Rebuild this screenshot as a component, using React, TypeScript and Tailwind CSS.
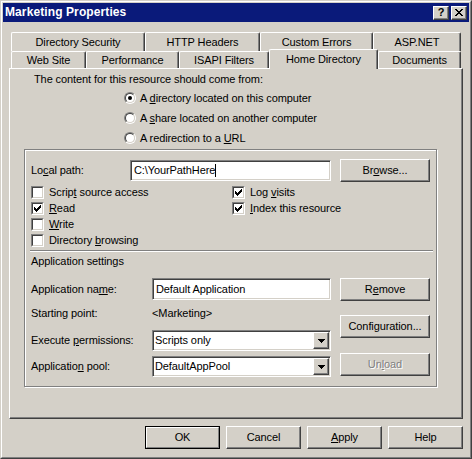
import type { ReactNode } from "react";

const backTabs = [
  { label: "Directory Security", w: "w-[134px]" },
  { label: "HTTP Headers", w: "w-[115px]" },
  { label: "Custom Errors", w: "w-[113px]" },
  { label: "ASP.NET", w: "w-[88px]" },
];

const frontTabs = [
  { label: "Web Site", w: "w-[75px]" },
  { label: "Performance", w: "w-[93px]" },
  { label: "ISAPI Filters", w: "w-[90px]" },
  { label: "Home Directory", w: "w-[109px]", active: true },
  { label: "Documents", w: "w-[83px]" },
];

const raised =
  "border border-t-white border-l-white border-r-[#404040] border-b-[#404040] shadow-[inset_-1px_-1px_0_#808080]";
const sunken =
  "border border-t-[#808080] border-l-[#808080] border-r-white border-b-white shadow-[inset_1px_1px_0_#404040,inset_-1px_-1px_0_#d4d0c8]";

function Button({
  children,
  className = "",
  primary = false,
  disabled = false,
}: {
  children: ReactNode;
  className?: string;
  primary?: boolean;
  disabled?: boolean;
}) {
  const label = (
    <span className={disabled ? "text-[#808080] [text-shadow:1px_1px_0_#fff]" : ""}>{children}</span>
  );
  if (primary) {
    return (
      <div className={`border border-black ${className}`}>
        <div className="flex h-full w-full items-center justify-center border border-t-white border-l-white border-r-[#808080] border-b-[#808080]">
          {label}
        </div>
      </div>
    );
  }
  return <div className={`flex items-center justify-center ${raised} ${className}`}>{label}</div>;
}

function CheckMark() {
  const px: [number, number][] = [
    [6, 0],
    [5, 1], [6, 1],
    [0, 2], [4, 2], [5, 2], [6, 2],
    [0, 3], [1, 3], [3, 3], [4, 3], [5, 3],
    [0, 4], [1, 4], [2, 4], [3, 4], [4, 4],
    [1, 5], [2, 5], [3, 5],
    [2, 6],
  ];
  return (
    <svg width="7" height="7" viewBox="0 0 7 7" shapeRendering="crispEdges">
      {px.map(([x, y]) => (
        <rect key={`${x}-${y}`} x={x} y={y} width="1" height="1" fill="#000" />
      ))}
    </svg>
  );
}

function CheckBox({ checked = false, children }: { checked?: boolean; children: ReactNode }) {
  return (
    <div className="flex h-[16px] items-center">
      <div className="h-[13px] w-[13px] shrink-0 border border-t-[#808080] border-l-[#808080] border-r-white border-b-white">
        <div className="flex h-full w-full items-center justify-center border border-t-[#404040] border-l-[#404040] border-r-[#d4d0c8] border-b-[#d4d0c8] bg-white">
          {checked && <CheckMark />}
        </div>
      </div>
      <span className="ml-[5px]">{children}</span>
    </div>
  );
}

function Radio({ checked = false, children }: { checked?: boolean; children: ReactNode }) {
  return (
    <div className="flex h-[20px] items-center">
      <div className="h-[12px] w-[12px] shrink-0 rounded-full border border-t-[#808080] border-l-[#808080] border-r-white border-b-white">
        <div className="flex h-full w-full items-center justify-center rounded-full border border-t-[#404040] border-l-[#404040] border-r-[#d4d0c8] border-b-[#d4d0c8] bg-white">
          {checked && <div className="h-[4px] w-[4px] rounded-full bg-black" />}
        </div>
      </div>
      <span className="ml-[4px]">{children}</span>
    </div>
  );
}

function Arrow() {
  return (
    <svg width="7" height="4" viewBox="0 0 7 4" shapeRendering="crispEdges">
      <rect x="0" y="0" width="7" height="1" fill="#000" />
      <rect x="1" y="1" width="5" height="1" fill="#000" />
      <rect x="2" y="2" width="3" height="1" fill="#000" />
      <rect x="3" y="3" width="1" height="1" fill="#000" />
    </svg>
  );
}

function Select({ value }: { value: string }) {
  return (
    <div className={`flex h-[21px] w-[179px] items-center justify-between bg-white ${sunken}`}>
      <span className="pl-[2px]">{value}</span>
      <div className={`m-[1px] flex h-[17px] w-[16px] items-center justify-center bg-[#d4d0c8] ${raised}`}>
        <Arrow />
      </div>
    </div>
  );
}

function CloseGlyph() {
  const rows = ["11....11", ".11..11.", "..1111..", "...11...", "..1111..", ".11..11.", "11....11"];
  return (
    <svg width="8" height="7" viewBox="0 0 8 7" shapeRendering="crispEdges">
      {rows.flatMap((r, y) =>
        r.split("").map((c, x) => (c === "1" ? <rect key={`${x}-${y}`} x={x} y={y} width="1" height="1" fill="#000" /> : null))
      )}
    </svg>
  );
}

function TitleBar() {
  return (
    <div className="flex h-[19px] shrink-0 items-center justify-between bg-[#0a1a7a] pl-[2px] pr-[2px]">
      <span className="text-[12px] font-bold tracking-[0.1px] text-white">Marketing Properties</span>
      <div className="flex gap-[2px]">
        <div className={`flex h-[14px] w-[16px] items-center justify-center bg-[#d4d0c8] ${raised}`}>
          <span className="text-[11px] font-bold leading-none">?</span>
        </div>
        <div className={`flex h-[14px] w-[16px] items-center justify-center bg-[#d4d0c8] ${raised}`}>
          <CloseGlyph />
        </div>
      </div>
    </div>
  );
}

function Tabs() {
  return (
    <div className="ml-[2px] flex flex-col">
      <div className="flex h-[19px]">
        {backTabs.map((t) => (
          <div
            key={t.label}
            className={`${t.w} flex items-center justify-center rounded-t-[2px] border-t border-l border-r border-t-white border-l-white border-r-[#404040] pt-[1px] shadow-[inset_-1px_0_0_#808080]`}
          >
            {t.label}
          </div>
        ))}
      </div>
      <div className="flex h-[17px] items-end">
        {frontTabs.map((t) =>
          t.active ? (
            <div
              key={t.label}
              className={`${t.w} relative z-10 -mb-[1px] flex h-[20px] items-center justify-center rounded-t-[2px] border-t border-l border-r border-t-white border-l-white border-r-[#404040] bg-[#d4d0c8] pb-[1px] shadow-[inset_-1px_0_0_#808080]`}
            >
              {t.label}
            </div>
          ) : (
            <div
              key={t.label}
              className={`${t.w} flex h-[17px] items-center justify-center rounded-t-[2px] border-t border-l border-r border-t-white border-l-white border-r-[#404040] pt-[1px] shadow-[inset_-1px_0_0_#808080]`}
            >
              {t.label}
            </div>
          )
        )}
      </div>
    </div>
  );
}

function Panel() {
  return (
    <div className={`flex h-[351px] flex-col ${raised}`}>
      <div className="ml-[24px] mt-[4px] flex h-[13px] items-center">The content for this resource should come from:</div>
      <div className="ml-[114px] mt-[2px] flex flex-col">
        <Radio checked>
          A <u>d</u>irectory located on this computer
        </Radio>
        <Radio>
          A <u>s</u>hare located on another computer
        </Radio>
        <Radio>
          A redirection to a <u>U</u>RL
        </Radio>
      </div>

      <div className="ml-[14px] mt-[1px] flex h-[238px] w-[413px] flex-col border border-[#808080] shadow-[inset_1px_1px_0_#fff,1px_1px_0_#fff]">
        <div className="mt-[9px] flex h-[23px] items-center pl-[6px]">
          <span className="w-[99px]">
            Lo<u>c</u>al path:
          </span>
          <div className={`flex h-[21px] w-[201px] items-center bg-white pl-[3px] ${sunken}`}>
            <span>C:\YourPathHere</span>
            <span className="h-[13px] w-[1px] bg-black" />
          </div>
          <Button className="ml-[9px] h-[23px] w-[90px]">
            Br<u>o</u>wse...
          </Button>
        </div>

        <div className="mt-[2px] flex pl-[6px]">
          <div className="flex w-[201px] flex-col">
            <CheckBox>
              Scrip<u>t</u> source access
            </CheckBox>
            <CheckBox checked>
              <u>R</u>ead
            </CheckBox>
            <CheckBox>
              <u>W</u>rite
            </CheckBox>
            <CheckBox>
              Directory <u>b</u>rowsing
            </CheckBox>
          </div>
          <div className="flex flex-col">
            <CheckBox checked>
              Log <u>v</u>isits
            </CheckBox>
            <CheckBox checked>
              <u>I</u>ndex this resource
            </CheckBox>
          </div>
        </div>

        <div className="ml-[5px] mt-[2px] h-[2px] w-[403px] border-t border-b border-t-[#808080] border-b-white" />

        <div className="ml-[6px] mt-[3px] flex h-[13px] items-center">Application settings</div>

        <div className="mt-[10px] flex pl-[6px]">
          <div className="flex w-[309px] flex-col">
            <div className="flex h-[22px] items-center">
              <span className="w-[121px]">
                Application na<u>m</u>e:
              </span>
              <div className={`flex h-[22px] w-[179px] items-center bg-white pl-[3px] ${sunken}`}>Default Application</div>
            </div>
            <div className="mt-[2px] flex h-[22px] items-center">
              <span className="w-[121px]">Starting point:</span>
              <span>&lt;Marketing&gt;</span>
            </div>
            <div className="mt-[6px] flex h-[21px] items-center">
              <span className="w-[121px]">
                Execute <u>p</u>ermissions:
              </span>
              <Select value="Scripts only" />
            </div>
            <div className="mt-[5px] flex h-[21px] items-center">
              <span className="w-[121px]">
                Applicatio<u>n</u> pool:
              </span>
              <Select value="DefaultAppPool" />
            </div>
          </div>
          <div className="flex flex-col">
            <Button className="h-[23px] w-[90px]">
              R<u>e</u>move
            </Button>
            <Button className="mt-[14px] h-[23px] w-[90px]">Configuration...</Button>
            <Button className="mt-[15px] h-[23px] w-[90px]" disabled>
              Un<u>l</u>oad
            </Button>
          </div>
        </div>
      </div>
    </div>
  );
}

export default function App() {
  return (
    <div className="h-[459px] w-[472px] border border-t-[#d4d0c8] border-l-[#d4d0c8] border-r-[#404040] border-b-[#404040] bg-[#d4d0c8] font-['Liberation_Sans',Arial,sans-serif] text-[11px] leading-[13px] tracking-[-0.1px] text-black">
      <div className="flex h-full w-full flex-col border border-t-white border-l-white border-r-[#808080] border-b-[#808080] p-[1px]">
        <TitleBar />
        <div className="flex flex-col px-[6px] pt-[10px]">
          <Tabs />
          <Panel />
          <div className="mt-[7px] flex justify-end gap-[6px]">
            <Button primary className="h-[23px] w-[75px]">
              OK
            </Button>
            <Button className="h-[23px] w-[75px]">Cancel</Button>
            <Button className="h-[23px] w-[75px]">
              <u>A</u>pply
            </Button>
            <Button className="h-[23px] w-[75px]">Help</Button>
          </div>
        </div>
      </div>
    </div>
  );
}
